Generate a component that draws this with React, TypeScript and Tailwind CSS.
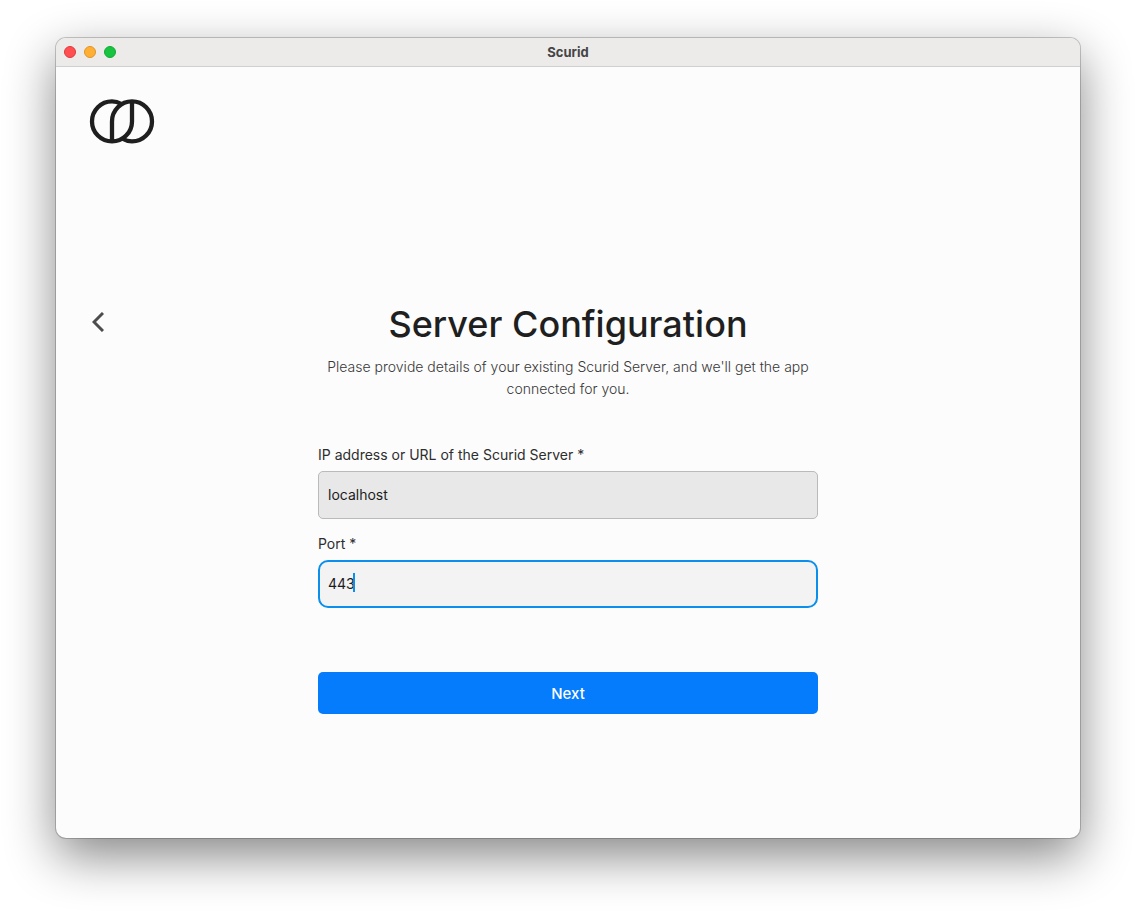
import * as React from "react"

const trafficLights = [
  { label: "Close window", style: "border-[#e2383c] bg-[#ff4f50]" },
  { label: "Minimize window", style: "border-[#e09427] bg-[#ffb034]" },
  { label: "Zoom window", style: "border-[#11ab36] bg-[#17c33f]" },
]

function Logo() {
  return (
    <svg viewBox="0 0 64 44" className="h-11 w-16 overflow-visible" role="img" aria-label="Scurid">
      <g fill="none" stroke="#1f1f1f" strokeWidth="4.3">
        <path d="M42 3.4V22.4A20 20 0 1 1 22 2.4Q27 2.4 31 4.8" />
        <path d="M22 41.4V22.4A20 20 0 1 1 42 42.4Q37 42.4 33 40" />
      </g>
    </svg>
  )
}

function TitleBar() {
  return (
    <header className="grid h-[29px] grid-cols-3 items-center border-b border-[#cfcfcf] bg-[#ecebe9] px-2">
      <div className="flex gap-2">
        {trafficLights.map((light) => (
          <button key={light.label} aria-label={light.label} className={`size-3 rounded-full border ${light.style}`} />
        ))}
      </div>
      <span className="text-center text-[13px] leading-4 font-bold text-[#454545]">Scurid</span>
    </header>
  )
}

export default function App() {
  const [host, setHost] = React.useState("localhost")
  const [port, setPort] = React.useState("443")

  return (
    <div className="flex min-h-screen flex-col bg-white px-14 pt-[38px] pb-[74px] font-['Inter',sans-serif]">
      <div className="flex grow flex-col overflow-hidden rounded-[10px] bg-[#fcfcfc] shadow-[0_0_0_1px_rgba(0,0,0,0.2),0_18px_50px_rgba(0,0,0,0.48)]">
        <TitleBar />
        <div className="px-[34px] pt-8">
          <Logo />
        </div>
        <main className="mt-[157px] grid grid-cols-[1fr_500px_1fr] items-start pb-8">
          <button aria-label="Back" className="mt-3 ml-9 justify-self-start">
            <svg viewBox="0 0 12 20" className="h-5 w-3" fill="none" stroke="#4d4d4d" strokeWidth="3">
              <path d="M11 1L2 10L11 19" />
            </svg>
          </button>
          <form onSubmit={(e) => e.preventDefault()}>
            <h1 className="text-center text-4xl leading-12 font-medium text-[#1f1f1f]">Server Configuration</h1>
            <p className="mt-2 text-center text-sm leading-[22px] font-light text-[#383838]">
              Please provide details of your existing Scurid Server, and we'll get the app connected for you.
            </p>

            <label htmlFor="host" className="mt-[45px] block text-sm text-[#2e2e2e]">
              IP address or URL of the Scurid Server *
            </label>
            <input
              id="host"
              required
              value={host}
              onChange={(e) => setHost(e.target.value)}
              className="mt-1.5 block h-12 w-full rounded-[5px] border border-[#bababa] bg-[#e8e8e8] px-[9px] pb-0.5 text-sm text-[#1c1c1c] outline-none"
            />

            <label htmlFor="port" className="mt-[15px] block text-sm text-[#2e2e2e]">
              Port *
            </label>
            <div className="relative mt-1.5">
              <input
                id="port"
                required
                inputMode="numeric"
                value={port}
                onChange={(e) => setPort(e.target.value)}
                className="block h-12 w-full rounded-[10px] border-2 border-[#0a8fec] bg-[#f3f3f3] px-2 pb-0.5 text-sm text-[#1c1c1c] caret-transparent outline-none"
              />
              <span aria-hidden className="absolute top-[13px] left-[35px] h-[19px] w-0.5 bg-[#0a8fec]" />
            </div>

            <button type="submit" className="mt-16 h-[42px] w-full rounded-[5px] bg-[#047cfb] pt-0.5 text-[15px] font-medium text-white">
              Next
            </button>
          </form>
        </main>
      </div>
    </div>
  )
}
